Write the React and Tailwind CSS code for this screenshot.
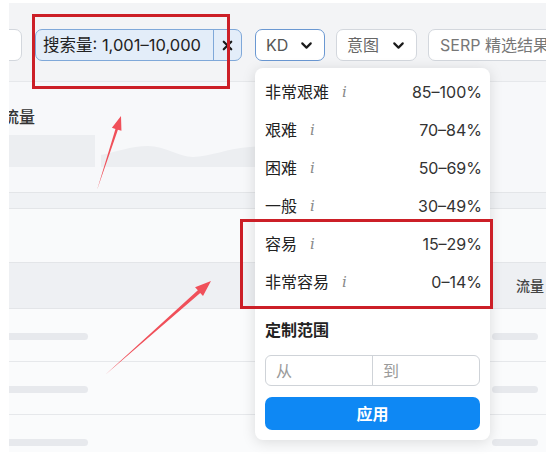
import React from 'react';
import { ChevronDown, X } from 'lucide-react';

const FONT = "font-['Inter','Noto_Sans_CJK_SC',sans-serif]";

// KD difficulty levels shown in the dropdown
const levels = [
  { label: '非常艰难', range: '85–100%' },
  { label: '艰难', range: '70–84%' },
  { label: '困难', range: '50–69%' },
  { label: '一般', range: '30–49%' },
  { label: '容易', range: '15–29%' },
  { label: '非常容易', range: '0–14%' },
];

// points for a thin tapered annotation arrow
const arrowPoints = (tx, ty, hx, hy, headLen, headW, shaftW) => {
  const dx = hx - tx;
  const dy = hy - ty;
  const len = Math.sqrt(dx * dx + dy * dy);
  const ux = dx / len;
  const uy = dy / len;
  const nx = -uy;
  const ny = ux;
  const bx = hx - headLen * ux;
  const by = hy - headLen * uy;
  const pts = [
    [tx, ty],
    [bx - shaftW * nx, by - shaftW * ny],
    [bx - headW * nx, by - headW * ny],
    [hx, hy],
    [bx + headW * nx, by + headW * ny],
    [bx + shaftW * nx, by + shaftW * ny],
  ];
  return pts.map((p) => p.map((v) => v.toFixed(2)).join(',')).join(' ');
};

const SkeletonRow = ({ last }) => (
  <div className={`relative ${last ? 'h-[37px]' : 'h-[53px] border-b border-[#e6e8eb]'} bg-[#fafbfc] flex items-start pt-[24px]`}>
    <div className="w-[79px] h-[7px] rounded-r-full bg-[#e7e9ed]" />
    <div className="ml-auto mr-[8px] w-[46px] h-[7px] rounded-full bg-[#e7e9ed]" />
  </div>
);

const App = () => {
  return (
    <div className={`relative w-[546px] h-[458px] bg-white overflow-hidden ${FONT}`}>
      <div className="ml-[9px] mt-[3px] w-[537px] h-[449px] bg-[#f7f8fa] overflow-hidden flex flex-col">
        {/* filter bar */}
        <div className="h-[79px] shrink-0 bg-[#f3f4f6] border-b border-[#e6e8eb] flex items-start pt-[26px] gap-[13px]">
          <div className="ml-[-27px] w-[40px] h-[32px] shrink-0 rounded-[7px] border border-[#d3d7dd] bg-white" />
          <div className="w-[207px] h-[32px] shrink-0 flex rounded-[7px] border border-[#7fa8d9] bg-[#e3edf9] overflow-hidden">
            <div className="flex-1 flex items-center pl-[7px] text-[16.5px] text-[#222] whitespace-nowrap">
              搜索量: 1,001–10,000
            </div>
            <div className="w-[28px] flex items-center justify-center border-l border-[#7fa8d9]">
              <X size={15} strokeWidth={3.5} className="text-[#1a1a1a]" />
            </div>
          </div>
          <div className="flex gap-[11px]">
            <div className="w-[70px] h-[32px] shrink-0 flex items-center justify-between pl-[10px] pr-[9px] rounded-[7px] border border-[#6a98d2] bg-white">
              <span className="text-[16px] text-[#555]">KD</span>
              <ChevronDown size={17} strokeWidth={3} className="text-[#1a1a1a]" />
            </div>
            <div className="w-[81px] h-[32px] shrink-0 flex items-center justify-between pl-[10px] pr-[9px] rounded-[7px] border border-[#d3d7dd] bg-white">
              <span className="text-[16px] text-[#666]">意图</span>
              <ChevronDown size={17} strokeWidth={3} className="text-[#1a1a1a]" />
            </div>
            <div className="w-[140px] h-[32px] shrink-0 flex items-center pl-[11px] rounded-[7px] border border-[#d3d7dd] bg-white">
              <span className="text-[16px] text-[#777] whitespace-nowrap">SERP 精选结果</span>
            </div>
          </div>
        </div>

        {/* traffic chart */}
        <div className="h-[110px] shrink-0 pt-[25px]">
          <div className="ml-[-6px] h-[20px] leading-[20px] text-[16px] font-medium text-[#333]">流量</div>
          <div className="mt-[8px] flex gap-[6px]">
            <div className="w-[86px] h-[32px] bg-[#eceef1]" />
            <svg width="160" height="32" viewBox="0 0 160 32">
              <path
                d="M0 20 C 15 17, 30 11, 47 11 C 64 11, 78 22, 92 22 C 108 22, 128 13, 149 12 L 160 11 L 160 32 L 0 32 Z"
                fill="#eceef1"
              />
            </svg>
          </div>
        </div>

        <div className="h-[17px] shrink-0 bg-[#f0f2f5] border-y border-[#e3e5e8]" />
        <div className="h-[53px] shrink-0 bg-[#f9fafb]" />

        {/* table */}
        <div className="h-[47px] shrink-0 bg-[#eef0f3] border-y border-[#e3e5e8] flex items-center justify-end">
          <span className="mr-[2px] text-[14px] font-medium text-[#444]">流量</span>
        </div>
        <SkeletonRow />
        <SkeletonRow />
        <SkeletonRow last />
      </div>

      {/* KD dropdown */}
      <div className="absolute left-[255px] top-[68px] w-[235px] h-[372px] bg-white rounded-[8px] shadow-[0_2px_14px_rgba(0,0,0,0.13)] px-[10px] pt-[5px]">
        {levels.map((lv) => (
          <div key={lv.label} className="h-[38px] flex items-center text-[16px]">
            <span className="text-[#222]">{lv.label}</span>
            <span className="ml-[13px] font-['DejaVu_Serif',serif] italic text-[15px] text-[#8a8a8a]">i</span>
            <span className="ml-auto mr-[-2px] text-[#333]">{lv.range}</span>
          </div>
        ))}
        <div className="mt-[19px] h-[20px] leading-[20px] text-[16px] font-bold text-[#222]">定制范围</div>
        <div className="mt-[15px] h-[31px] flex rounded-[6px] border border-[#cfd3d8]">
          <div className="flex-1 flex items-center pl-[10px] text-[16px] text-[#9a9a9a]">从</div>
          <div className="flex-1 flex items-center pl-[10px] border-l border-[#cfd3d8] text-[16px] text-[#9a9a9a]">到</div>
        </div>
        <button className="mt-[11px] w-full h-[33px] rounded-[7px] bg-[#0e88f4] text-white text-[16px] font-bold">
          应用
        </button>
      </div>

      {/* annotations */}
      <div className="absolute left-[32px] top-[14px] w-[198px] h-[75px] border-[3px] border-[#cc1f27]" />
      <div className="absolute left-[240px] top-[219px] w-[253px] h-[90px] border-[3px] border-[#cc1f27]" />
      <svg className="absolute left-0 top-0 pointer-events-none" width="546" height="458">
        <polygon points={arrowPoints(97, 190, 121, 116, 14, 5, 1.3)} fill="#f0505a" />
        <polygon points={arrowPoints(105, 375, 211, 281, 16, 6, 1.8)} fill="#f0505a" />
      </svg>
    </div>
  );
};

export default App;
